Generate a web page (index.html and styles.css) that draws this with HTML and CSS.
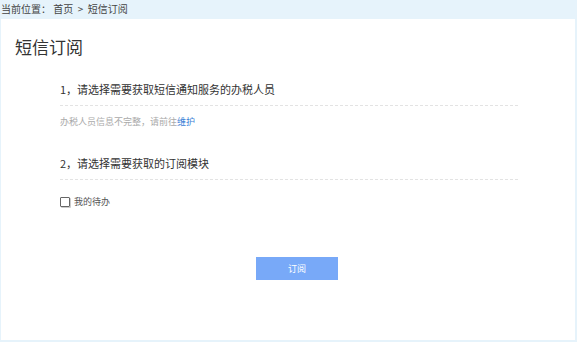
FILE: index.html
```html
<!DOCTYPE html>
<html lang="zh-CN">
<head>
  <meta charset="UTF-8" />
  <title>短信订阅</title>
  <link rel="stylesheet" href="styles.css">
</head>
<body>
  <div class="crumb">当前位置： 首页 &nbsp;&gt;&nbsp; 短信订阅</div>
  <div class="card">
    <h1>短信订阅</h1>
    <div class="section">
      <p class="step">1，请选择需要获取短信通知服务的办税人员</p>
      <p class="note">办税人员信息不完整，请前往<a href="#">维护</a></p>
      <p class="step">2，请选择需要获取的订阅模块</p>
      <label class="check"><span class="box"></span>我的待办</label>
    </div>
    <div class="actions">
      <button class="btn">订阅</button>
    </div>
  </div>
</body>
</html>
```

FILE: styles.css
```css
body {
  margin: 0;
  background: #e6f3fb;
  font-family: "Noto Sans CJK SC", "Liberation Sans", sans-serif;
  color: #333;
  height: 342px;
  overflow: hidden;
}
.crumb {   /* breadcrumb bar */
  height: 19px;
  line-height: 17px;
  font-size: 10px;
  color: #444;
  padding-left: 1px;
}
.card {   /* white content area */
  background: #fff;
  margin: 0 2px 0 1px;
  height: 321px;
  box-sizing: border-box;
  padding: 17px 0 0 14px;
}
h1 {
  margin: 0;
  font-size: 17px;
  font-weight: 400;
  line-height: 22px;
  color: #333;
}
.section {
  padding: 23px 0 0 45px;
  width: 458px;
}
.step {
  margin: 0;
  font-size: 11px;
  line-height: 16px;
  color: #333;
  padding-bottom: 8px;
  border-bottom: 1px dashed #e3e3e3;
}
.note {
  margin: 9px 0 26px;
  font-size: 9px;
  line-height: 14px;
  color: #aaa;
}
.note a {
  color: #3a7fd6;
  text-decoration: none;
}
.check {
  display: flex;
  align-items: center;
  margin-top: 15px;
  font-size: 9px;
  color: #555;
}
.box {
  width: 8px;
  height: 8px;
  border: 1px solid #666;
  border-radius: 1px;
  box-shadow: 1px 1px 0 #ccc;
  margin-right: 4px;
}
.actions {
  display: flex;
  justify-content: center;
  padding: 49px 14px 0 0;
  margin-left: -14px;
}
.btn {
  width: 82px;
  height: 23px;
  border: 0;
  background: #78a9f8;
  color: #fff;
  font-family: inherit;
  font-size: 9px;
  margin-left: 32px;
}
```
